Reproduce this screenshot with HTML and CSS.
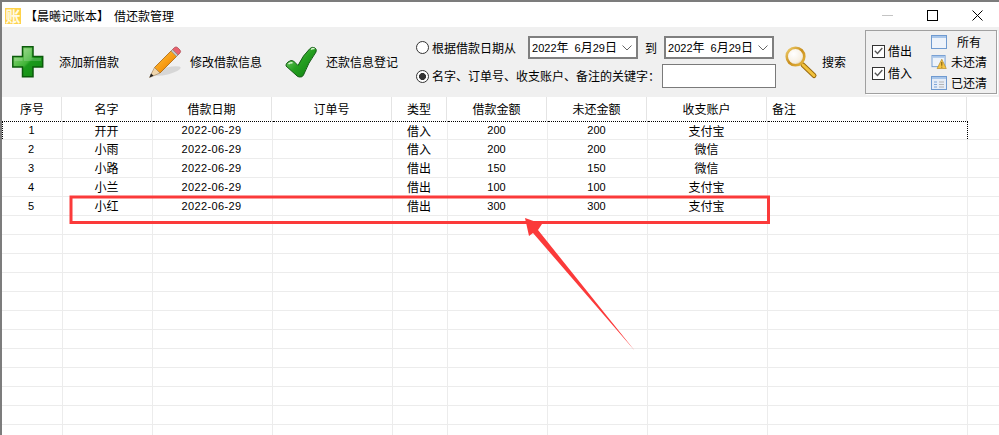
FILE: index.html
```html
<!DOCTYPE html>
<html lang="zh-CN">
<head>
<meta charset="utf-8">
<title>借还款管理</title>
<link rel="stylesheet" href="styles.css">
</head>
<body>
<div class="window">
  <header class="titlebar">
    <span class="app-icon">账</span>
    <span class="title">【晨曦记账本】<span class="title-sub">借还款管理</span></span>
    <div class="controls">
      <span class="ctl"><svg width="11" height="11" viewBox="0 0 11 11"><path d="M0 5.5h11" stroke="#c4c4c4" fill="none"/></svg></span>
      <span class="ctl"><svg width="11" height="11" viewBox="0 0 11 11"><rect x="0.5" y="0.5" width="10" height="10" stroke="#000" fill="none"/></svg></span>
      <span class="ctl"><svg width="11" height="11" viewBox="0 0 11 11"><path d="M0.5 0.5l10 10M10.5 0.5l-10 10" stroke="#000" fill="none"/></svg></span>
    </div>
  </header>

  <section class="toolbar">
    <div class="tool tool-add">
      <svg class="icon32" viewBox="0 0 32 32">
        <defs>
          <linearGradient id="gPlus" x1="0" y1="0" x2="1" y2="1"><stop offset="0" stop-color="#a6e28e"/><stop offset=".5" stop-color="#3fb336"/><stop offset=".55" stop-color="#1c9a1c"/><stop offset="1" stop-color="#0f8a10"/></linearGradient>
        </defs>
        <path d="M10.5 .8h10.500v9.700h9.700v10.500h-9.700v9.700h-10.500v-9.700h-9.700v-10.500h9.700z" fill="url(#gPlus)" stroke="#0b5a0b" stroke-width="1.500"/>
        <path d="M12 2.500h7.500v9.500h9.500v3h-17zM2.500 12h8v3h-8z" fill="#fff" opacity=".18"/>
      </svg>
      <span class="tool-label">添加新借款</span>
    </div>
    <div class="tool tool-edit">
      <svg class="icon32" viewBox="0 0 32 32">
        <defs>
          <linearGradient id="gPen" x1="0" y1="0" x2="1" y2="1"><stop offset="0" stop-color="#ffc84a"/><stop offset=".55" stop-color="#f79a12"/><stop offset="1" stop-color="#c96d08"/></linearGradient>
        </defs>
        <ellipse cx="18" cy="25" rx="14" ry="3.500" transform="rotate(-14 18 25)" fill="#cfcfcf" opacity=".8"/>
        <path d="M5.500 21.500L23.500 3.500l5.500 5.500-18 18z" fill="url(#gPen)" stroke="#a8650e" stroke-width=".8"/>
        <path d="M5.500 21.500L.5 31.500l10.500-4.500z" fill="#efd6ae" stroke="#9a7a50" stroke-width=".6"/>
        <path d="M.5 31.500l1.500-4 2.600 2.300z" fill="#222"/>
        <path d="M23.500 3.500l2-2q1.500-1.200 3 0l2.500 2.500q1.200 1.500 0 3l-2 2z" fill="#e8616e" stroke="#a8404a" stroke-width=".7"/>
        <path d="M22 5l5.500 5.500 1.500-1.500-5.500-5.500z" fill="#c4c4c4" stroke="#808080" stroke-width=".5"/>
      </svg>
      <span class="tool-label">修改借款信息</span>
    </div>
    <div class="tool tool-repay">
      <svg class="icon32" viewBox="0 0 32 32">
        <defs>
          <linearGradient id="gChk" x1="0" y1="0" x2="1" y2="1"><stop offset="0" stop-color="#9fe08e"/><stop offset=".5" stop-color="#25a020"/><stop offset="1" stop-color="#0b7a10"/></linearGradient>
        </defs>
        <path d="M1 20q-.5-2 2-4 3-2.500 5.500-1l4.500 4.500Q18 9 25 2.500q2.500-2 5-.5 2 1.500 1 4Q23 17 18.500 29q-1 2.500-4 2-2 0-3.500-2z" fill="url(#gChk)" stroke="#155c16"/>
        <path d="M3.500 18q2-2 4-1M26 3.500q2-1.500 3.500-.5" stroke="#d8f5d0" fill="none" stroke-width="1.500"/>
      </svg>
      <span class="tool-label">还款信息登记</span>
    </div>

    <div class="filter">
      <div class="filter-row">
        <input class="radio" type="radio" name="mode">
        <span class="filter-label">根据借款日期从</span>
        <div class="combo"><span class="combo-text"><span class="num">2022</span>年<span class="num month">6</span>月<span class="num">29</span>日</span><svg width="10" height="6" viewBox="0 0 10 6"><path d="M.5 .5L5 5 9.500 .5" stroke="#666" fill="none"/></svg></div>
        <span class="to">到</span>
        <div class="combo"><span class="combo-text"><span class="num">2022</span>年<span class="num month">6</span>月<span class="num">29</span>日</span><svg width="10" height="6" viewBox="0 0 10 6"><path d="M.5 .5L5 5 9.500 .5" stroke="#666" fill="none"/></svg></div>
      </div>
      <div class="filter-row">
        <input class="radio" type="radio" name="mode" checked>
        <span class="keyword-label">名字、订单号、收支账户、备注的关键字：</span>
        <input class="keyword" type="text">
      </div>
    </div>

    <div class="tool tool-search">
      <svg class="icon32" viewBox="0 0 32 32">
        <defs>
          <radialGradient id="gLens" cx=".4" cy=".35" r=".7"><stop offset="0" stop-color="#fff"/><stop offset=".7" stop-color="#f6efe2"/><stop offset="1" stop-color="#d9c49a"/></radialGradient>
          <linearGradient id="gRing" x1="0" y1="0" x2="1" y2="1"><stop offset="0" stop-color="#f0d070"/><stop offset=".5" stop-color="#c98f1e"/><stop offset="1" stop-color="#e8b840"/></linearGradient>
        </defs>
        <path d="M18 19l11 10.500" stroke="#9a6a10" stroke-width="5" stroke-linecap="round"/>
        <path d="M18 19l11 10.500" stroke="#f2c23c" stroke-width="3" stroke-linecap="round"/>
        <circle cx="10.500" cy="10.500" r="8.800" fill="url(#gLens)" stroke="url(#gRing)" stroke-width="2.600"/>
      </svg>
      <span class="search-label">搜索</span>
    </div>

    <div class="group">
      <div class="checks">
        <div class="check-row"><span class="check"><svg width="9" height="8" viewBox="0 0 9 8"><path d="M.8 3.800L3.500 6.500 8.300 1" stroke="#555" stroke-width="1.300" fill="none"/></svg></span>借出</div>
        <div class="check-row"><span class="check"><svg width="9" height="8" viewBox="0 0 9 8"><path d="M.8 3.800L3.500 6.500 8.300 1" stroke="#555" stroke-width="1.300" fill="none"/></svg></span>借入</div>
      </div>
      <div class="options">
        <div class="option">
          <svg class="icon16" viewBox="0 0 16 14"><rect x=".5" y=".5" width="15" height="13" fill="#eef3fa" stroke="#6f9ad0"/><rect x="1" y="1" width="14" height="2" fill="#a8c6ea"/></svg>
          <span class="option-label">所有</span>
        </div>
        <div class="option">
          <svg class="icon16" viewBox="0 0 16 15"><rect x=".5" y=".5" width="14" height="12" fill="#eef3fa" stroke="#6f9ad0"/><rect x="1" y="1" width="13" height="2" fill="#a8c6ea"/><path d="M11 4.500l4.800 10h-9.800z" fill="#f6c644" stroke="#b08420" stroke-width=".7"/><path d="M11 7.500v4M11 12.500v1" stroke="#6a4a08"/></svg>
          <span class="option-label">未还清</span>
        </div>
        <div class="option">
          <svg class="icon16" viewBox="0 0 16 14"><rect x=".5" y=".5" width="15" height="13" fill="#e6edf7" stroke="#6f9ad0"/><rect x="1" y="1" width="14" height="2" fill="#a8c6ea"/><path d="M3 6h3M3 8.500h3M3 11h3" stroke="#7fa6d8"/><path d="M8 6h5M8 8.500h5M8 11h5" stroke="#b4b4b4"/></svg>
          <span class="option-label">已还清</span>
        </div>
      </div>
    </div>
  </section>

  <section class="sheet">
    <div class="row head">
      <div>序号</div><div>名字</div><div>借款日期</div><div>订单号</div><div>类型</div><div>借款金额</div><div>未还金额</div><div>收支账户</div><div class="left">备注</div><div class="end"></div>
    </div>
    <div class="row first">
      <div class="num">1</div><div>开开</div><div class="num date">2022-06-29</div><div></div><div>借入</div><div class="num">200</div><div class="num">200</div><div>支付宝</div><div></div><div class="end"></div>
    </div>
    <div class="row">
      <div class="num">2</div><div>小雨</div><div class="num date">2022-06-29</div><div></div><div>借入</div><div class="num">200</div><div class="num">200</div><div>微信</div><div></div><div class="end"></div>
    </div>
    <div class="row">
      <div class="num">3</div><div>小路</div><div class="num date">2022-06-29</div><div></div><div>借出</div><div class="num">150</div><div class="num">150</div><div>微信</div><div></div><div class="end"></div>
    </div>
    <div class="row">
      <div class="num">4</div><div>小兰</div><div class="num date">2022-06-29</div><div></div><div>借出</div><div class="num">100</div><div class="num">100</div><div>支付宝</div><div></div><div class="end"></div>
    </div>
    <div class="row">
      <div class="num">5</div><div>小红</div><div class="num date">2022-06-29</div><div></div><div>借出</div><div class="num">300</div><div class="num">300</div><div>支付宝</div><div></div><div class="end"></div>
    </div>
    <div class="row"><div></div><div></div><div></div><div></div><div></div><div></div><div></div><div></div><div></div><div class="end"></div></div>
    <div class="row"><div></div><div></div><div></div><div></div><div></div><div></div><div></div><div></div><div></div><div class="end"></div></div>
    <div class="row"><div></div><div></div><div></div><div></div><div></div><div></div><div></div><div></div><div></div><div class="end"></div></div>
    <div class="row"><div></div><div></div><div></div><div></div><div></div><div></div><div></div><div></div><div></div><div class="end"></div></div>
    <div class="row"><div></div><div></div><div></div><div></div><div></div><div></div><div></div><div></div><div></div><div class="end"></div></div>
    <div class="row"><div></div><div></div><div></div><div></div><div></div><div></div><div></div><div></div><div></div><div class="end"></div></div>
    <div class="row"><div></div><div></div><div></div><div></div><div></div><div></div><div></div><div></div><div></div><div class="end"></div></div>
    <div class="row"><div></div><div></div><div></div><div></div><div></div><div></div><div></div><div></div><div></div><div class="end"></div></div>
    <div class="row"><div></div><div></div><div></div><div></div><div></div><div></div><div></div><div></div><div></div><div class="end"></div></div>
    <div class="row"><div></div><div></div><div></div><div></div><div></div><div></div><div></div><div></div><div></div><div class="end"></div></div>
    <div class="row"><div></div><div></div><div></div><div></div><div></div><div></div><div></div><div></div><div></div><div class="end"></div></div>
    <div class="row"><div></div><div></div><div></div><div></div><div></div><div></div><div></div><div></div><div></div><div class="end"></div></div>
  </section>

  <svg class="annotation" width="999" height="435" viewBox="0 0 999 435">
    <rect x="71" y="197" width="697.500" height="25.500" fill="none" stroke="#fb3a3a" stroke-width="3"/>
    <path d="M525 218L542 224 538 230 635 351 533 233 529 236z" fill="#fb3a3a"/>
  </svg>
</div>
</body>
</html>
```
FILE: styles.css
```css
html, body {
  margin: 0;
  padding: 0;
  height: 100%;
  background: #fff;
  overflow: hidden;
}

.window {
  position: relative;
  width: 999px;
  height: 435px;
  box-sizing: border-box;
  overflow: hidden;
  border-top: 2px solid #7c7c7c;
  border-left: 2px solid #7c7c7c;
  font-family: "Noto Sans CJK SC", "Noto Sans", sans-serif;
  font-size: 12px;
  line-height: 16px;
  color: #000;
}

.num {
  font-family: "Liberation Sans", Arial, sans-serif;
  font-size: 11px;
}
.date {
  letter-spacing: .35px;
}
.month {
  margin-left: 6px;
}

/* title bar */
.titlebar {
  height: 25px;
  display: flex;
  align-items: center;
  padding-left: 3px;
}
.app-icon {
  width: 16px;
  height: 16px;
  margin-top: 2px;
  background: #ffd24a;
  color: #fffbe6;
  font-size: 15px;
  font-weight: 700;
  line-height: 16px;
  text-align: center;
}
.title {
  margin-left: 4px;
  margin-top: 3px;
  color: #000;
}
.title-sub {
  margin-left: 5px;
}
.controls {
  margin-left: auto;
  margin-right: -1px;
  display: flex;
}
.ctl {
  width: 45px;
  height: 25px;
  display: flex;
  align-items: center;
  justify-content: center;
  margin-top: 2px;
}

/* toolbar */
.toolbar {
  height: 70px;
  background: #f0f0f0;
  display: flex;
  align-items: center;
  padding-left: 10px;
}
.tool {
  display: flex;
  align-items: center;
  flex: none;
}
.icon32 {
  width: 32px;
  height: 32px;
  flex: none;
  overflow: visible;
}
.tool-label {
  margin-left: 9px;
}
.tool-add .tool-label {
  margin-left: 15px;
}
.tool-edit {
  margin-left: 30px;
}
.tool-repay {
  margin-left: 23px;
}
.filter {
  margin-left: 18px;
  display: flex;
  flex-direction: column;
  gap: 5px;
}
.filter-row {
  display: flex;
  align-items: center;
  height: 23px;
}
.filter-row + .filter-row {
  height: 24px;
}
.radio {
  appearance: none;
  width: 13px;
  height: 13px;
  margin: 0;
  box-sizing: border-box;
  border: 1px solid #333;
  border-radius: 50%;
  background: #fff;
  flex: none;
}
.radio:checked {
  background: radial-gradient(circle, #333 0, #333 3.2px, #fff 3.8px);
}
.filter-label {
  margin-left: 3px;
  width: 96px;
}
.keyword-label {
  margin-left: 3px;
  width: 230px;
  white-space: nowrap;
}
.combo {
  width: 110px;
  height: 23px;
  box-sizing: border-box;
  border: 2px solid #7f7f7f;
  background: #fff;
  display: flex;
  align-items: center;
  justify-content: space-between;
  padding: 0 4px 0 2px;
}
.combo-text {
  white-space: nowrap;
}
.to {
  width: 26px;
  text-align: center;
}
.keyword {
  width: 114px;
  height: 24px;
  box-sizing: border-box;
  margin: 0;
  border: 1px solid #7a7a7a;
  background: #fff;
  outline: none;
  font: inherit;
}
.tool-search {
  margin-left: 9px;
}
.search-label {
  margin-left: 5px;
}

/* filter group */
.group {
  margin-left: 19px;
  width: 132px;
  height: 64px;
  box-sizing: border-box;
  border: 1px solid #a0a0a0;
  box-shadow: 1px 1px 0 #fff;
  display: flex;
  padding-left: 6px;
}
.checks {
  width: 59px;
  display: flex;
  flex-direction: column;
  gap: 6px;
  padding-top: 12px;
}
.check-row {
  display: flex;
  align-items: center;
  height: 16px;
}
.check {
  width: 13px;
  height: 13px;
  box-sizing: border-box;
  border: 1px solid #333;
  background: #fff;
  margin-right: 3px;
  display: flex;
  align-items: center;
  justify-content: center;
}
.options {
  display: flex;
  flex-direction: column;
  padding-top: 1px;
}
.option {
  display: flex;
  align-items: center;
  height: 21px;
}
.icon16 {
  width: 16px;
  height: 14px;
  flex: none;
  overflow: visible;
}
.option-label {
  margin-left: 4px;
  width: 36px;
  text-align: center;
  white-space: nowrap;
}

/* table */
.sheet {
  display: flex;
  flex-direction: column;
}
.row {
  display: grid;
  grid-template-columns: 61px 90px 120px 120px 55px 100px 100px 120px 200px 1fr;
  height: 19px;
  box-sizing: border-box;
  border-bottom: 1px solid #ececec;
}
.row > div {
  border-right: 1px solid #ececec;
  box-sizing: border-box;
  padding-right: 2px;
  text-align: center;
  line-height: 18px;
  min-width: 0;
}
.row > .end {
  border-right: 0;
}
.row.head {
  height: 24px;
  border-bottom: 0;
  margin-left: -1px;
}
.row.head > div {
  padding-right: 0;
  line-height: 24px;
  border-right-color: #e4e4e4;
}
.row.head > div:first-child {
  padding-left: 2px;
}
.row.head > .left {
  text-align: left;
  padding-left: 5px;
}
.row.first > div:not(.end) {
  border-top: 1px dotted #000;
  line-height: 17px;
}
.row.first > div:first-child {
  border-left: 1px dotted #000;
}
.row.first > div:nth-child(9) {
  border-right: 1px dotted #000;
}

/* annotation drawn over the screenshot */
.annotation {
  position: absolute;
  left: -2px;
  top: -2px;
  pointer-events: none;
}
```
